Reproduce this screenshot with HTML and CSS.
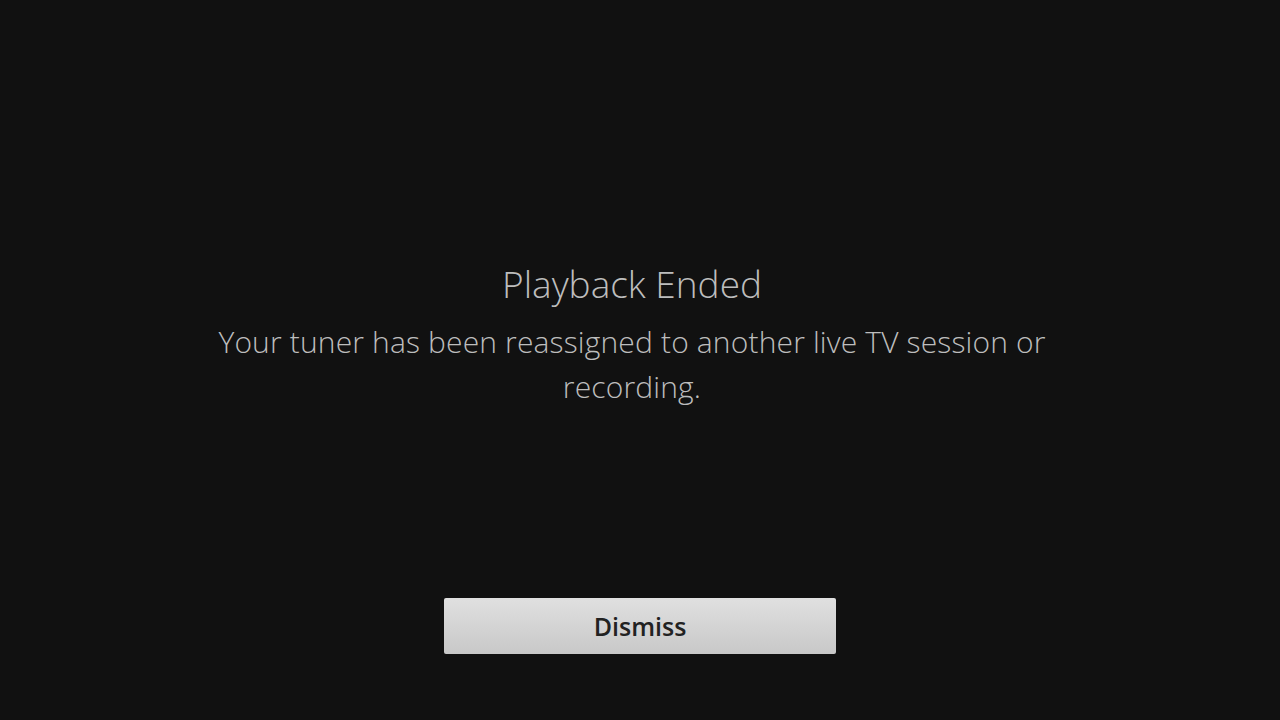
FILE: index.html
```html
<!DOCTYPE html>
<html>
<head>
<meta charset="utf-8">
<link rel="stylesheet" href="styles.css">
</head>
<body>
<div class="screen">
  <div class="message">
    <h1 class="title">Playback Ended</h1>
    <p class="text">Your tuner has been reassigned to another live TV session or recording.</p>
  </div>
  <button class="dismiss">Dismiss</button>
</div>
</body>
</html>
```
FILE: styles.css
```css
html, body {
  margin: 0;
  padding: 0;
  background: #111111;
}
.screen {
  width: 1280px;
  height: 720px;
  display: flex;
  flex-direction: column;
  align-items: center;
  font-family: "Open Sans", "Liberation Sans", sans-serif;
}
.message {
  margin-top: 261px;
  width: 860px;
  padding-right: 16px;
  text-align: center;
  color: #bdbdbd;
}
.title {
  margin: 0;
  font-size: 37px;
  font-weight: 300;
  line-height: 46px;
}
.text {
  margin: 12px 0 0 0;
  font-size: 30px;
  font-weight: 300;
  line-height: 45px;
  letter-spacing: 0.15px;
}
.dismiss {
  margin-top: 189px;
  width: 392px;
  height: 56px;
  border: none;
  border-radius: 2px;
  background: linear-gradient(#e0e0e0, #c8c8c8);
  color: #222222;
  font-family: "Open Sans", "Liberation Sans", sans-serif;
  font-weight: 600;
  font-size: 25px;
  padding: 0;
}
```
